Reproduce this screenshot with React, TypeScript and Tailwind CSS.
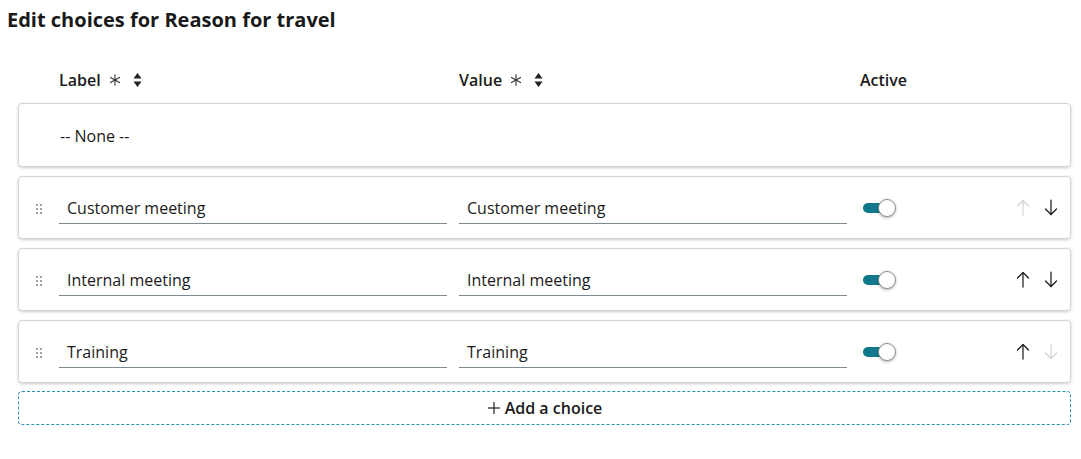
import * as React from "react";

type Choice = { label: string; value: string; active: boolean; canUp: boolean; canDown: boolean };

const choices: Choice[] = [
  { label: "Customer meeting", value: "Customer meeting", active: true, canUp: false, canDown: true },
  { label: "Internal meeting", value: "Internal meeting", active: true, canUp: true, canDown: true },
  { label: "Training", value: "Training", active: true, canUp: true, canDown: false },
];

function SortIcon() {
  return (
    <svg width="9" height="16" viewBox="0 0 9 16" className="text-[#222]">
      <path d="M4.5 1 L8.5 6.5 H0.5 Z" fill="currentColor" />
      <path d="M4.5 15 L8.5 9.5 H0.5 Z" fill="currentColor" />
    </svg>
  );
}

function Asterisk() {
  return (
    <svg width="12" height="12" viewBox="0 0 12 12" className="text-[#333]">
      <g stroke="currentColor" strokeWidth="1.1" strokeLinecap="round">
        <path d="M6 0.8 V11.2" />
        <path d="M1.5 3.4 L10.5 8.6" />
        <path d="M1.5 8.6 L10.5 3.4" />
      </g>
    </svg>
  );
}

function DragHandle() {
  return (
    <svg width="6" height="10" viewBox="0 0 6 10" className="text-[#777]">
      {[1, 5, 9].map((y) =>
        [1, 5].map((x) => <circle key={`${x}-${y}`} cx={x} cy={y} r="0.9" fill="currentColor" />)
      )}
    </svg>
  );
}

function Arrow({ dir, disabled }: { dir: "up" | "down"; disabled?: boolean }) {
  return (
    <svg
      width="14"
      height="17"
      viewBox="0 0 14 17"
      className={disabled ? "text-[#d0d4d6]" : "text-[#1d1d1d]"}
      style={{ transform: dir === "down" ? "rotate(180deg)" : undefined }}
    >
      <g stroke="currentColor" strokeWidth="1.25" fill="none" strokeLinecap="round" strokeLinejoin="round">
        <path d="M7 1.5 V16" />
        <path d="M1.5 7 L7 1.5 L12.5 7" />
      </g>
    </svg>
  );
}

function Toggle({ on }: { on: boolean }) {
  return (
    <div className="relative w-[33px] h-[18px] flex items-center">
      <div className={`h-[10px] w-[26px] rounded-full ${on ? "bg-[#11788c]" : "bg-[#b8c0c3]"}`} />
      <div className="absolute right-0 top-0 h-[18px] w-[18px] rounded-full bg-white border border-[#8a9296] shadow-[0_1px_3px_rgba(0,0,0,0.3)]" />
    </div>
  );
}

function Field({ text }: { text: string }) {
  return (
    <div className="w-[388px] h-[33px] flex items-center pt-[2px] px-2 border-b border-[#7d8a8d] text-[16px] text-[#1b1b1b]">
      {text}
    </div>
  );
}

export default function App() {
  return (
    <div className="w-[1081px] h-[459px] bg-white font-['Open_Sans','Noto_Sans',sans-serif] text-[#1b1b1b]">
      <h1 className="pl-[7px] pt-[6px] text-[20px] font-bold leading-[28px] text-[#1a1a1a]">
        Edit choices for Reason for travel
      </h1>

      <div className="pl-[18px] pr-[10px] pt-[32px]">
        <div className="flex items-center h-[27px] text-[16px] font-semibold">
          <div className="w-[441px] pl-[41px] flex items-center gap-[8px]">
            <span>Label</span>
            <Asterisk />
            <span className="ml-[4px] flex"><SortIcon /></span>
          </div>
          <div className="w-[401px] flex items-center gap-[8px]">
            <span>Value</span>
            <Asterisk />
            <span className="ml-[4px] flex"><SortIcon /></span>
          </div>
          <div>Active</div>
        </div>

        <div className="mt-[10px] flex flex-col gap-[9px]">
          <div className="h-[64px] rounded-[4px] border border-[#cfd4d6] shadow-[0_1px_3px_rgba(0,0,0,0.2)] flex items-center pl-[41px] pt-[1px] text-[16px]">
            -- None --
          </div>

          {choices.map((c) => (
            <div
              key={c.label}
              className="h-[63px] rounded-[4px] border border-[#cfd4d6] shadow-[0_1px_3px_rgba(0,0,0,0.2)] flex items-center"
            >
              <div className="w-[40px] flex justify-center pt-[2px]">
                <DragHandle />
              </div>
              <Field text={c.label} />
              <div className="w-[12px]" />
              <Field text={c.value} />
              <div className="ml-[16px]">
                <Toggle on={c.active} />
              </div>
              <div className="ml-auto mr-[12px] flex items-center gap-[14px]">
                <Arrow dir="up" disabled={!c.canUp} />
                <Arrow dir="down" disabled={!c.canDown} />
              </div>
            </div>
          ))}

          <div className="-mt-[1px] h-[34px] rounded-[4px] border border-dashed border-[#2a94ab] flex items-center justify-center gap-[4px] text-[16px] font-semibold">
            <svg width="14" height="14" viewBox="0 0 14 14" className="text-[#222]">
              <g stroke="currentColor" strokeWidth="1.2">
                <path d="M7 1 V13" />
                <path d="M1 7 H13" />
              </g>
            </svg>
            <span>Add a choice</span>
          </div>
        </div>
      </div>
    </div>
  );
}
